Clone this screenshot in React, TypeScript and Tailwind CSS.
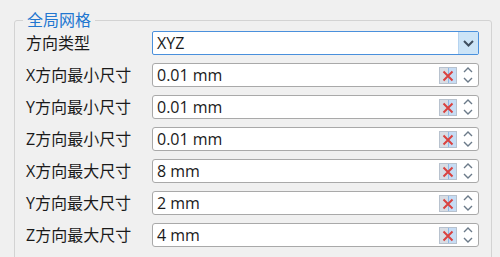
const rows = [
  { label: "X方向最小尺寸", value: "0.01 mm" },
  { label: "Y方向最小尺寸", value: "0.01 mm" },
  { label: "Z方向最小尺寸", value: "0.01 mm" },
  { label: "X方向最大尺寸", value: "8 mm" },
  { label: "Y方向最大尺寸", value: "2 mm" },
  { label: "Z方向最大尺寸", value: "4 mm" },
];

function Chevron({ up, className }: { up?: boolean; className?: string }) {
  return (
    <svg width="10" height="6" viewBox="0 0 10 6" className={className}>
      <path
        d={up ? "M1 5 L5 1 L9 5" : "M1 1 L5 5 L9 1"}
        fill="none"
        stroke="currentColor"
        strokeWidth="1.4"
      />
    </svg>
  );
}

function ClearButton() {
  return (
    <div className="relative w-[18px] h-[17px] border border-[#b8c2ce] bg-[#d8dde4] flex">
      <div className="ml-[8px] flex-1 bg-[#c6dcf4] border-l border-[#8fb8e6]" />
      <svg
        width="12"
        height="12"
        viewBox="0 0 12 12"
        className="absolute left-[2px] top-[2px]"
      >
        <path d="M1.5 1.5 L10.5 10.5 M10.5 1.5 L1.5 10.5" stroke="#d9413f" strokeWidth="2" />
      </svg>
    </div>
  );
}

function SpinBox({ value }: { value: string }) {
  return (
    <div className="w-[327px] h-[24px] bg-white border border-[#a9a9a9] rounded-[3px] flex items-center">
      <span className="flex-1 pl-[4px] leading-[22px]">{value}</span>
      <ClearButton />
      <div className="w-[21px] flex flex-col items-center gap-[4px] text-[#6b7a89]">
        <Chevron up />
        <Chevron />
      </div>
    </div>
  );
}

function ComboBox({ value }: { value: string }) {
  return (
    <div className="w-[327px] h-[24px] bg-white border border-[#4a90dc] rounded-[2px] flex">
      <span className="flex-1 pl-[4px] leading-[22px]">{value}</span>
      <div className="w-[20px] bg-[#cce4f7] border-l border-[#b5d3f0] flex items-center justify-center text-[#3f4e5f]">
        <svg width="11" height="7" viewBox="0 0 11 7">
          <path d="M1 1 L5.5 5.5 L10 1" fill="none" stroke="currentColor" strokeWidth="2" />
        </svg>
      </div>
    </div>
  );
}

export default function App() {
  return (
    <div
      className="w-[500px] h-[257px] overflow-hidden bg-[#f0f0f0] text-[16px] text-[#1a1a1a] pt-[12px]"
      style={{ fontFamily: '"Open Sans", "Noto Sans CJK SC", sans-serif' }}
    >
      <fieldset className="ml-[14px] w-[478px] h-[260px] border border-[#d3d3d3] rounded-[3px] pl-[11px] pr-[11px] pt-[3px]">
        <legend className="ml-[-3px] px-[4px] leading-[16px] text-[#2277d0]">全局网格</legend>
        <div className="flex flex-col gap-[8px]">
          <div className="flex items-center h-[24px]">
            <span className="w-[126px] leading-[24px]">方向类型</span>
            <ComboBox value="XYZ" />
          </div>
          {rows.map((r) => (
            <div key={r.label} className="flex items-center h-[24px]">
              <span className="w-[126px] leading-[24px]">{r.label}</span>
              <SpinBox value={r.value} />
            </div>
          ))}
        </div>
      </fieldset>
    </div>
  );
}
